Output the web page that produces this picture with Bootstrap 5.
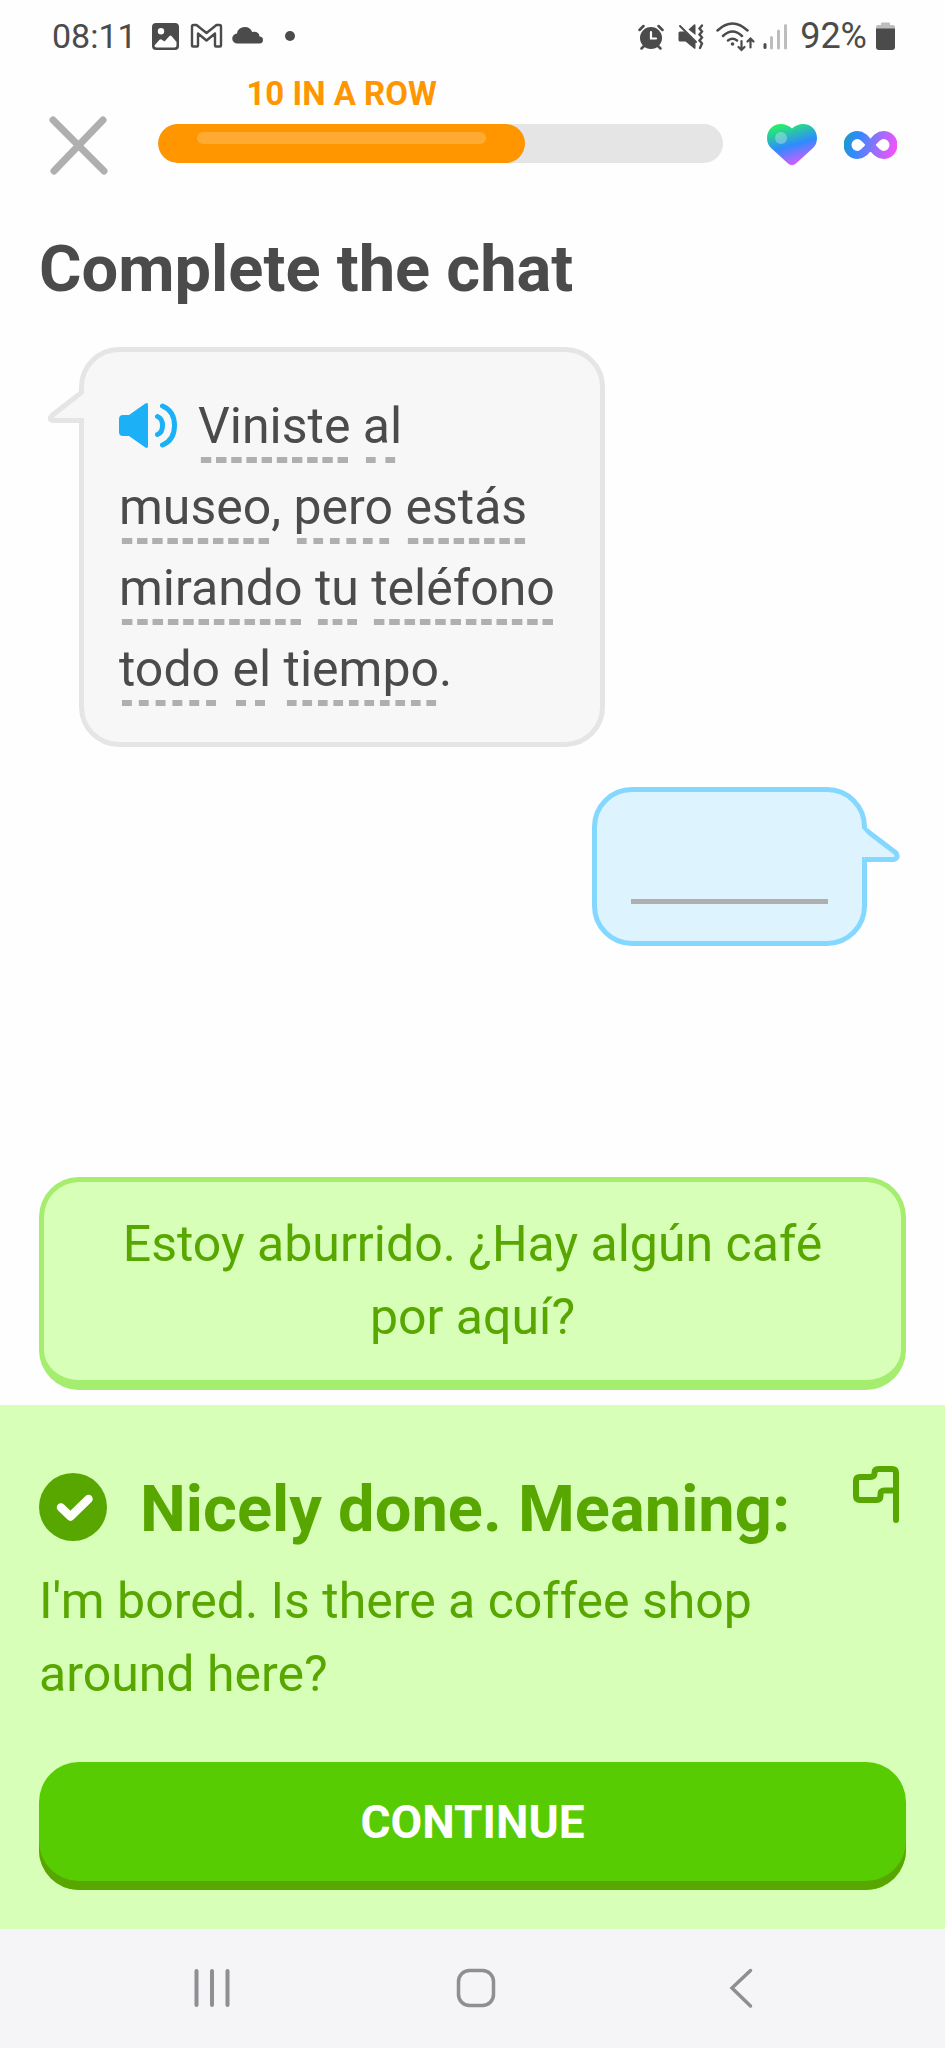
<!DOCTYPE html>
<html lang="en">
<head>
<meta charset="utf-8">
<meta name="viewport" content="width=device-width, initial-scale=1">
<title>Complete the chat</title>
<link href="https://cdn.jsdelivr.net/npm/bootstrap@5.3.0/dist/css/bootstrap.min.css" rel="stylesheet">
<style>
  body { background: #fefefe; color: #4b4b4b; font-family: Roboto, "Liberation Sans", sans-serif; font-size: 50px; line-height: 73px; }
  svg { display: block; flex: none; }
  .icon-btn { border: 0; background: none; padding: 0; color: inherit; }
  .status-bar { height: 72px; padding: 0 50px 0 52px; font-size: 34px; line-height: 40px; }
  .notices { margin-left: 10px; }
  .battery-level { font-size: 36px; margin: 0 9px 0 12px; }
  .lesson-top { padding: 2px 48px 0 48px; }
  .quit { color: #afafaf; margin-right: 50px; }
  .streak { padding-bottom: 12px; margin-right: 44px; }
  .streak-label { color: #ff9600; font-size: 33px; line-height: 40px; margin-bottom: 10px; }
  .lesson-progress { height: 39px; border-radius: 20px; background: #e5e5e5; }
  .lesson-progress .progress-bar { background: #ff9600; border-radius: 20px; padding: 8px 39px 19px; }
  .shine { height: 12px; border-radius: 6px; background: #ffab33; }
  .lives { gap: 27px; padding-bottom: 9px; }
  .big-title { font-size: 65px; line-height: 78px; font-weight: 700; }
  .lesson { padding: 55px 39px 15px 39px; }
  .bubble { position: relative; border: 5px solid; border-radius: 40px; }
  .bubble-tail { position: absolute; top: 36px; }
  .bubble-in { width: 526px; max-width: 100%; margin: 39px 0 0 40px; padding: 34px 30px 32px 35px; background: #f7f7f7; border-color: #e5e5e5; line-height: 81px; }
  .bubble-in .bubble-tail { right: 100%; }
  .bubble-out { width: 275px; margin: 40px 39px 0 0; padding: 107px 34px 37px; background: #ddf4ff; border-color: #84d8ff; }
  .bubble-out .bubble-tail { left: 100%; }
  .blank { height: 5px; background: #afafaf; }
  .speaker { color: #1cb0f6; margin-right: 21px; vertical-align: -5px; line-height: 1; }
  .hint { padding-bottom: 8px; background: linear-gradient(90deg, transparent 3px, #afafaf 3px 13px, transparent 13px) 0 100% / 16px 6px; background-repeat: round no-repeat; }
  .choice { border: 5px solid #a5ed6e; border-bottom-width: 10px; border-radius: 40px; background: #d7ffb8; color: #58a700; padding: 26px 45px; }
  .feedback { background: #d7ffb8; color: #58a700; padding: 61px 39px 39px 39px; }
  .feedback-head { gap: 33px; }
  .verdict { margin-top: 7px; }
  .meaning { margin: 17px 0 51px; }
  .go { border: 0; border-radius: 40px; background: #58cc02; color: #fff; box-shadow: inset 0 -9px #58a700; font-size: 46px; font-weight: 700; line-height: 60px; padding: 30px 0 38px; }
  .system-nav { background: #f5f5f7; color: #8e8e93; padding: 39px 72px 39px 80px; }
</style>
</head>
<body class="d-flex flex-column min-vh-100">

<div class="status-bar d-flex align-items-center">
  <span>08:11</span>
  <svg class="notices" width="150" height="32" viewBox="143 20 150 32" fill="#4b4b4b" aria-hidden="true">
    <path fill-rule="evenodd" d="M152 23h19a4 4 0 0 1 4 4v19a4 4 0 0 1-4 4h-19a4 4 0 0 1-4-4V27a4 4 0 0 1 4-4zM157 28a3.200 3.200 0 1 0 0 6.400a3.200 3.200 0 0 0 0-6.400zM150.500 45.500q0 2 2 2h18q2 0 2-2v-3.500l-5-6q-1-1-2 0l-5 5.500l-3-2q-1-.700-2 .2z"/>
    <path d="M188 45.500V26.500q0-1.500 1.500-1.500h3L202.500 33l10-8h3q1.500 0 1.500 1.500v19q0 1-1 1h-4q-1 0-1-1V33.500L202.500 40.500L194 33.500v12q0 1-1 1h-4q-1 0-1-1z" fill="none" stroke="#4b4b4b" stroke-width="2.400" stroke-linejoin="round"/>
    <path d="M233.500 43.500a5 5 0 0 1-.5-10q1-6.500 8-6.500q5 0 7.200 5q6.800-1 7.300 4.500q3.500.3 3.500 3.500t-3.500 3.500z"/>
    <circle cx="286" cy="36" r="5"/>
  </svg>
  <svg class="ms-auto" width="150" height="32" viewBox="635 20 150 32" fill="none" stroke="#4b4b4b" stroke-width="2.500" stroke-linecap="round" aria-hidden="true">
    <circle cx="648" cy="38" r="11" fill="#4b4b4b" stroke="none"/>
    <path d="M636.500 30l4-4M659.500 30l-4-4M641 46l-2.500 2.500M655 46l2.500 2.500"/>
    <path d="M648 32v6.500h5" stroke="#fefefe" stroke-width="2.200"/>
    <path d="M675.500 33q0-1.500 1.500-1.500h4.500l11 10.500v6.500q-1 .5-1.500 0l-8.500-7H677q-1.500 0-1.500-1.500zM685.500 29.500l5.500-5q1.500-.7 1.500 1v9.500z" fill="#4b4b4b" stroke="none"/>
    <path d="M677 26l16 16" stroke-width="2"/>
    <path d="M699 25.500l-2.500 3 2.500 3-2.500 3 2.500 3-2.500 3 2.500 3-2 4.500" stroke-width="2.400"/>
    <path d="M714.500 30.500q15-14 30 0M720 36q9.500-9 19 0M725 40.500q4.500-3.500 9 0"/>
    <circle cx="729.500" cy="44" r="1.800" fill="#4b4b4b" stroke="none"/>
    <path d="M738.500 41v9m-3-3l3 3 3-3M747.500 47.500v-9m-3 3l3-3 3 3" stroke-width="2.200"/>
    <path d="M762 44.500v3" stroke-width="3"/>
    <path d="M768.500 37.500v10.500M775.500 31v17M782.500 25.500v22.500" stroke="#bdbdbd" stroke-width="3"/>
  </svg>
  <span class="battery-level">92%</span>
  <svg width="19" height="32" viewBox="875 20 19 32" aria-hidden="true">
    <path d="M880 25v-1.500q0-1 1-1h7q1 0 1 1V25h3q2 0 2 2v4h-19v-4q0-2 2-2z" fill="#bdbdbd"/>
    <path d="M875 28.500h19V47q0 3-3 3h-13q-3 0-3-3z" fill="#4b4b4b"/>
  </svg>
</div>

<header class="lesson-top d-flex align-items-end">
  <button class="icon-btn quit" type="button" aria-label="Quit lesson">
    <svg width="60" height="60" viewBox="0 0 60 60" fill="none" stroke="currentColor" stroke-width="7" stroke-linecap="round"><path d="M5 5l51 51M55 5L6 56"/></svg>
  </button>
  <div class="streak flex-grow-1">
    <div class="streak-label fw-bold text-center" style="width:65%">10 IN A ROW</div>
    <div class="progress lesson-progress" role="progressbar" aria-label="Lesson progress" aria-valuenow="65" aria-valuemin="0" aria-valuemax="100">
      <div class="progress-bar" style="width:65%"><div class="shine"></div></div>
    </div>
  </div>
  <div class="lives d-flex align-items-center">
    <svg width="50" height="42" viewBox="0 0 50 42" role="img" aria-label="Hearts">
      <defs><linearGradient id="heartFill" x1=".2" y1="0" x2=".55" y2="1"><stop offset=".05" stop-color="#26ee6c"/><stop offset=".55" stop-color="#2e8bff"/><stop offset="1" stop-color="#d95bff"/></linearGradient></defs>
      <path d="M25 4.500Q30 0 36 0C44 0 50 6 50 14Q50 20 46 24L29 39.500Q25 43 21 39.500L4 24Q0 20 0 14C0 6 6 0 14 0Q20 0 25 4.500z" fill="url(#heartFill)"/>
      <circle cx="14" cy="14" r="6" fill="#fff" opacity=".3"/>
    </svg>
    <svg width="53" height="28" viewBox="0 0 53 28" fill="none" role="img" aria-label="Unlimited">
      <defs><linearGradient id="loopFill" gradientUnits="userSpaceOnUse" x1="0" y1="5" x2="53" y2="20"><stop offset="0" stop-color="#1c9bc0"/><stop offset=".25" stop-color="#2e8bff"/><stop offset=".6" stop-color="#9270fa"/><stop offset="1" stop-color="#fc50fa"/></linearGradient></defs>
      <path d="M26.500 14C21 7 18 4 13.500 4a10 10 0 0 0 0 20C18 24 21 21 26.500 14S35 4 39.500 4a10 10 0 0 1 0 20C35 24 32 21 26.500 14z" stroke="url(#loopFill)" stroke-width="8"/>
    </svg>
  </div>
</header>

<main class="lesson flex-grow-1 d-flex flex-column">
  <h1 class="big-title m-0">Complete the chat</h1>

  <div class="bubble bubble-in align-self-start">
    <svg class="bubble-tail" width="37" height="36" viewBox="0 0 37 36" aria-hidden="true">
      <path d="M34.500 4.500L5 27.500Q1 31.500 6 32.500H37" fill="#f7f7f7" stroke="#e5e5e5" stroke-width="5"/>
      <path d="M31.500 10L37 5.500V30H31.500z" fill="#f7f7f7"/>
    </svg>
    <p class="m-0"><button class="icon-btn speaker" type="button" aria-label="Play audio"><svg width="58" height="45" viewBox="0 0 58 45"><path d="M0 16q0-4 4-4h6L26 .8q3-2 3 1.200v41q0 3-3 1.200L10 33H4q-4 0-4-4z" fill="currentColor"/><path d="M38.500 13.500q5 2 5 9t-5 9M43.500 3q12 5 12 19.500T43.500 42" fill="none" stroke="currentColor" stroke-width="5" stroke-linecap="round"/></svg></button><span class="hint">Viniste</span> <span class="hint">al</span><br>
    <span class="hint">museo</span>, <span class="hint">pero</span> <span class="hint">estás</span><br>
    <span class="hint">mirando</span> <span class="hint">tu</span> <span class="hint">teléfono</span><br>
    <span class="hint">todo</span> <span class="hint">el</span> <span class="hint">tiempo</span>.</p>
  </div>

  <div class="bubble bubble-out align-self-end">
    <svg class="bubble-tail" width="38" height="41" viewBox="0 0 38 41" aria-hidden="true">
      <path d="M2.500 1L34 25Q37 30 32 31.500H2.500" fill="#ddf4ff" stroke="#84d8ff" stroke-width="5"/>
      <path d="M0 0L5.500 6.500V29H0z" fill="#ddf4ff"/>
    </svg>
    <div class="blank"></div>
  </div>

  <button class="choice w-100 mt-auto" type="button">Estoy aburrido. ¿Hay algún café por aquí?</button>
</main>

<section class="feedback">
  <div class="feedback-head d-flex align-items-start">
    <svg class="verdict" width="68" height="68" viewBox="0 0 68 68" aria-hidden="true"><circle cx="34" cy="34" r="34" fill="#58a700"/><path d="M22 34.500l9.500 9L49.500 26" fill="none" stroke="#fff" stroke-width="8.500" stroke-linecap="round" stroke-linejoin="round"/></svg>
    <h2 class="big-title m-0 flex-grow-1 pt-1">Nicely done. Meaning:</h2>
    <button class="icon-btn" type="button" aria-label="Report a problem">
      <svg width="54" height="58" viewBox="0 0 54 58" fill="none" stroke="currentColor" stroke-width="6" stroke-linecap="round" stroke-linejoin="round"><path d="M44 54V7q0-4-4-4H26.500q-4 0-4 4v0q0 4-4 4H8q-4 0-4 4v15q0 4 4 4h16.500q4 0 4-4V28q0-3.500 4-3.500H44"/></svg>
    </button>
  </div>
  <p class="meaning">I'm bored. Is there a coffee shop<br>around here?</p>
  <button class="go w-100 d-block" type="button">CONTINUE</button>
</section>

<nav class="system-nav d-flex" aria-label="System">
  <button class="icon-btn flex-fill d-flex justify-content-center" type="button" aria-label="Recent apps"><svg width="40" height="41" viewBox="0 0 40 41" stroke="currentColor" stroke-width="4" stroke-linecap="round"><path d="M4.500 3v34M20 3v34M35.500 3v34"/></svg></button>
  <button class="icon-btn flex-fill d-flex justify-content-center" type="button" aria-label="Home"><svg width="40" height="41" viewBox="0 0 40 41" fill="none" stroke="currentColor" stroke-width="3.500"><rect x="2.500" y="2.500" width="35" height="35" rx="11"/></svg></button>
  <button class="icon-btn flex-fill d-flex justify-content-center" type="button" aria-label="Back"><svg width="40" height="41" viewBox="0 0 40 41" fill="none" stroke="currentColor" stroke-width="3.500" stroke-linecap="round"><path d="M29.500 2.500L11 20l18.500 18"/></svg></button>
</nav>

<script src="https://cdn.jsdelivr.net/npm/bootstrap@5.3.0/dist/js/bootstrap.bundle.min.js"></script>
</body>
</html>
